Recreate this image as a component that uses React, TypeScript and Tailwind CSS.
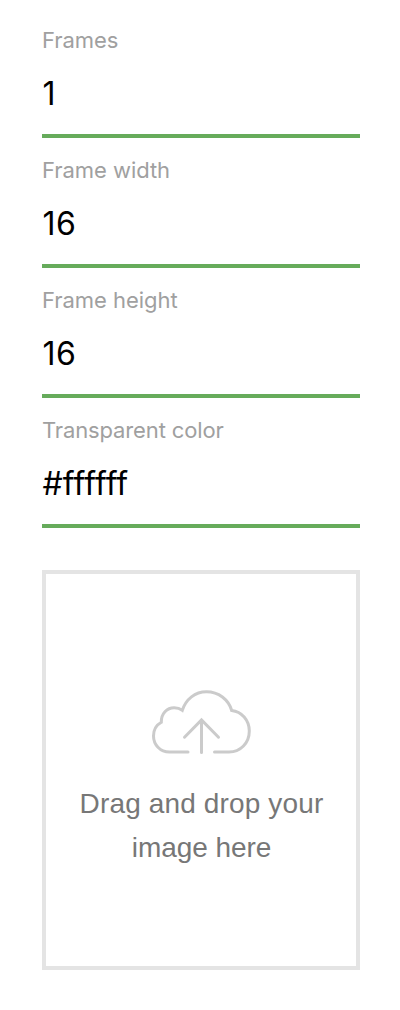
type FieldProps = { label: string; value: string; labelClass: string; valueClass: string };

function Field({ label, value, labelClass, valueClass }: FieldProps) {
  return (
    <div className="flex h-[130px] flex-col border-b-4 border-[#66ab5b] pt-[19px]">
      <span className={`block h-[26px] whitespace-nowrap text-[22px] leading-[26px] text-[#a0a0a0] ${labelClass}`}>{label}</span>
      <span className={`mt-[21px] block h-[40px] whitespace-nowrap text-[32px] leading-[40px] text-black ${valueClass}`}>{value}</span>
    </div>
  );
}

function CloudUpload() {
  return (
    <svg className="ml-[2px]" width="104" height="68" viewBox="150 688 104 68" fill="none" stroke="#cbcbcb" strokeWidth="3" strokeLinecap="round">
      <path d="M188 752H169.5C160 752 153.5 744.5 153.5 736C153.5 730 156.5 725 161.3 722.3C161 713.5 167 707.7 174.2 707.7C177.3 707.7 180 708.6 182.3 710.3C186 699 195 691.8 206.5 691.8C218.5 691.8 228.5 699.5 231.7 710.5C241.5 711.5 249.3 720 249.3 731C249.3 743 240.5 752 229 752H214.5" />
      <path d="M201.5 752.5V720M184.5 737.2L201.5 720L218.5 737.2" />
    </svg>
  );
}

export default function App() {
  return (
    <main className="flex h-[1010px] w-[400px] flex-col bg-white pl-[42px] pr-[40px] pt-[8px] font-['Inter',sans-serif]">
      <Field label="Frames" value="1" labelClass="tracking-[-0.05px]" valueClass="pl-[0.5px]" />
      <Field label="Frame width" value="16" labelClass="tracking-[-0.05px]" valueClass="pl-[0.5px] tracking-[0.5px]" />
      <Field label="Frame height" value="16" labelClass="tracking-[-0.05px]" valueClass="pl-[0.5px] tracking-[0.5px]" />
      <Field label="Transparent color" value="#ffffff" labelClass="tracking-[-0.13px]" valueClass="pl-[0.5px] tracking-[0.1px]" />
      <section className="mt-[42px] flex h-[400px] flex-col items-center border-4 border-[#e4e4e4] pt-[114px]">
        <CloudUpload />
        <p className="mt-[26px] pl-px text-center font-['Liberation_Sans',Arial,sans-serif] text-[28px] leading-[44px] text-[#777777]">
          <span className="tracking-[0.14px]">Drag and drop your</span>
          <br />
          <span className="tracking-[-0.08px]">image here</span>
        </p>
      </section>
    </main>
  );
}
